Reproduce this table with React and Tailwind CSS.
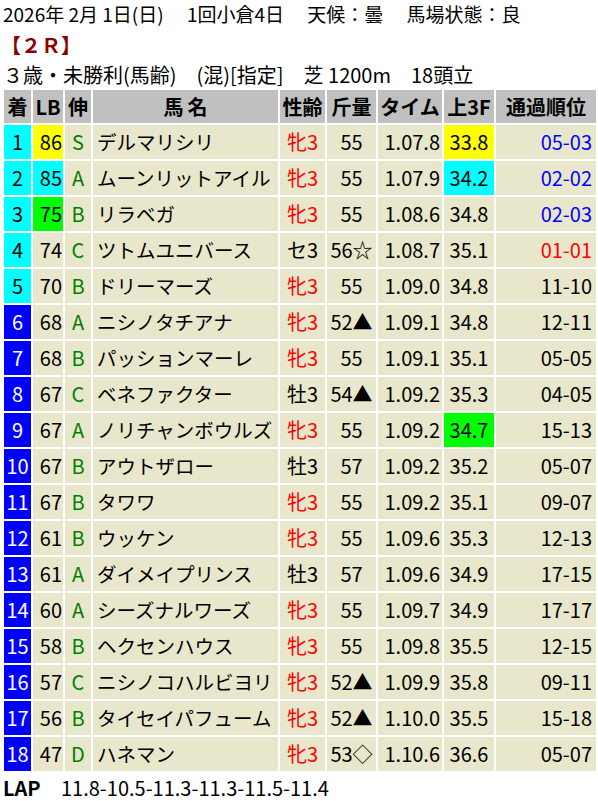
const rows = [
  ["1", "86", "S", "デルマリシリ", "牝3", "55", "1.07.8", "33.8", "05-03", "cyan", "yellow", "yellow", "blue"],
  ["2", "85", "A", "ムーンリットアイル", "牝3", "55", "1.07.9", "34.2", "02-02", "cyan", "cyan", "cyan", "blue"],
  ["3", "75", "B", "リラベガ", "牝3", "55", "1.08.6", "34.8", "02-03", "cyan", "lime", "", "blue"],
  ["4", "74", "C", "ツトムユニバース", "セ3", "56☆", "1.08.7", "35.1", "01-01", "cyan", "", "", "red"],
  ["5", "70", "B", "ドリーマーズ", "牝3", "55", "1.09.0", "34.8", "11-10", "cyan", "", "", ""],
  ["6", "68", "A", "ニシノタチアナ", "牝3", "52▲", "1.09.1", "34.8", "12-11", "blue", "", "", ""],
  ["7", "68", "B", "パッションマーレ", "牝3", "55", "1.09.1", "35.1", "05-05", "blue", "", "", ""],
  ["8", "67", "C", "ベネファクター", "牡3", "54▲", "1.09.2", "35.3", "04-05", "blue", "", "", ""],
  ["9", "67", "A", "ノリチャンボウルズ", "牝3", "55", "1.09.2", "34.7", "15-13", "blue", "", "lime", ""],
  ["10", "67", "B", "アウトザロー", "牡3", "57", "1.09.2", "35.2", "05-07", "blue", "", "", ""],
  ["11", "67", "B", "タワワ", "牝3", "55", "1.09.2", "35.1", "09-07", "blue", "", "", ""],
  ["12", "61", "B", "ウッケン", "牝3", "55", "1.09.6", "35.3", "12-13", "blue", "", "", ""],
  ["13", "61", "A", "ダイメイプリンス", "牡3", "57", "1.09.6", "34.9", "17-15", "blue", "", "", ""],
  ["14", "60", "A", "シーズナルワーズ", "牝3", "55", "1.09.7", "34.9", "17-17", "blue", "", "", ""],
  ["15", "58", "B", "ヘクセンハウス", "牝3", "55", "1.09.8", "35.5", "12-15", "blue", "", "", ""],
  ["16", "57", "C", "ニシノコハルビヨリ", "牝3", "52▲", "1.09.9", "35.8", "09-11", "blue", "", "", ""],
  ["17", "56", "B", "タイセイパフューム", "牝3", "52▲", "1.10.0", "35.5", "15-18", "blue", "", "", ""],
  ["18", "47", "D", "ハネマン", "牝3", "53◇", "1.10.6", "36.6", "05-07", "blue", "", "", ""],
]

const bgs = {
  cyan: "bg-[#00ffff]",
  yellow: "bg-[#ffff00]",
  lime: "bg-[#00ff00]",
  blue: "bg-[#0000ff] text-white",
  "": "bg-[#e8e7cb]",
}

const passColor = {
  blue: "text-[#0000ff]",
  red: "text-[#ff0000]",
  "": "text-black",
}

function App() {
  return (
    <div className="w-[598px] h-[801px] bg-white text-black text-[20px] overflow-hidden" style={{ fontFamily: '"Noto Sans CJK JP", "Noto Sans", sans-serif' }}>
      <div className="pl-[3px] text-[19px] leading-[28px] h-[31px] whitespace-nowrap">2026年 2月 1日(日)　 1回小倉4日　 天候：曇　 馬場状態：良</div>
      <div className="pl-[1px] leading-[28px] h-[30px] font-bold text-[#8b0000]">【２Ｒ】</div>
      <div className="pl-[3px] leading-[28px] h-[27px] whitespace-nowrap">３歳・未勝利(馬齢)　(混)[指定]　芝 1200m　18頭立</div>
      <div className="pl-[2px]">
        <table className="table-fixed border-separate border-spacing-[2px] w-[596px] leading-[34px]">
          <colgroup>
            <col className="w-[27px]" />
            <col className="w-[30px]" />
            <col className="w-[26px]" />
            <col className="w-[185px]" />
            <col className="w-[45px]" />
            <col className="w-[49px]" />
            <col className="w-[64px]" />
            <col className="w-[50px]" />
            <col />
          </colgroup>
          <thead>
            <tr className="bg-[#c0c0c0] font-bold h-[33px]">
              <th className="p-0 text-center leading-[33px]">着</th>
              <th className="p-0 text-center leading-[33px]">LB</th>
              <th className="p-0 text-center leading-[33px]">伸</th>
              <th className="p-0 pl-[4px] text-center leading-[33px] tracking-[4px]">馬名</th>
              <th className="p-0 text-center leading-[33px]">性齢</th>
              <th className="p-0 text-center leading-[33px]">斤量</th>
              <th className="p-0 text-center leading-[33px]">タイム</th>
              <th className="p-0 text-center leading-[33px]">上3F</th>
              <th className="p-0 text-center leading-[33px]">通過順位</th>
            </tr>
          </thead>
          <tbody>
            {rows.map((r) => (
              <tr key={r[0]} className="h-[34px]">
                <td className={`p-0 text-center whitespace-nowrap ${bgs[r[9]]}`}>{r[0]}</td>
                <td className={`p-0 pr-[1px] text-right ${bgs[r[10]]}`}>{r[1]}</td>
                <td className="p-0 text-center bg-[#e8e7cb] text-[#008000]">{r[2]}</td>
                <td className="p-0 pl-[4px] text-left text-[19.5px] bg-[#e8e7cb] whitespace-nowrap">{r[3]}</td>
                <td className={`p-0 text-center bg-[#e8e7cb] whitespace-nowrap ${r[4] === "牝3" ? "text-[#ff0000]" : ""}`}>{r[4]}</td>
                <td className="p-0 text-center bg-[#e8e7cb] whitespace-nowrap">{r[5]}</td>
                <td className="p-0 pr-[2px] text-right bg-[#e8e7cb]">{r[6]}</td>
                <td className={`p-0 text-center ${bgs[r[11]]}`}>{r[7]}</td>
                <td className={`p-0 pr-[4px] text-right bg-[#e8e7cb] ${passColor[r[12]]}`}>{r[8]}</td>
              </tr>
            ))}
          </tbody>
        </table>
      </div>
      <div className="pl-[3px] leading-[30px] flex whitespace-nowrap">
        <span className="font-bold w-[58px]">LAP</span>
        <span>11.8-10.5-11.3-11.3-11.5-11.4</span>
      </div>
    </div>
  )
}

export default App
